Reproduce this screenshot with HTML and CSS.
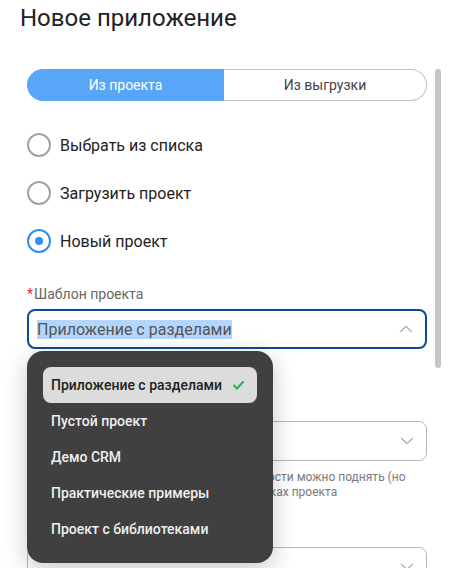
FILE: index.html
```html
<!DOCTYPE html>
<html>
<head>
    <meta name="viewport" content="width=device-width, initial-scale=1.0">
    <title>Новое приложение</title>
    <link rel="stylesheet" href="styles.css">
</head>
<body>
<div class="app">
    <h1 class="title">Новое приложение</h1>
    <div class="content">
        <form class="form">
            <div class="tabs">
                <button type="button" class="tab active">Из проекта</button>
                <button type="button" class="tab">Из выгрузки</button>
            </div>

            <div class="radios">
                <label class="radio"><span class="radio-mark"></span>Выбрать из списка</label>
                <label class="radio"><span class="radio-mark"></span>Загрузить проект</label>
                <label class="radio"><span class="radio-mark checked"></span>Новый проект</label>
            </div>

            <div class="field field-template">
                <div class="field-label"><span class="req">*</span>Шаблон проекта</div>
                <div class="select-wrap">
                    <div class="select open">
                        <span class="select-value"><mark>Приложение с разделами</mark></span>
                        <svg class="chevron" width="14" height="8" viewBox="0 0 14 8">
                            <polyline points="1,7 7,1.5 13,7" fill="none" stroke="#b0b0b0" stroke-width="1.3"/>
                        </svg>
                    </div>
                    <ul class="menu">
                        <li class="menu-item selected">
                            Приложение с разделами
                            <svg width="13" height="10" viewBox="0 0 13 10">
                                <polyline points="1.5,5 5,8.5 11.5,1.5" fill="none" stroke="#2bb44a" stroke-width="2"/>
                            </svg>
                        </li>
                        <li class="menu-item">Пустой проект</li>
                        <li class="menu-item">Демо CRM</li>
                        <li class="menu-item">Практические примеры</li>
                        <li class="menu-item">Проект с библиотеками</li>
                    </ul>
                </div>
            </div>

            <div class="field field-depth">
                <div class="field-label">Уровень вложенности</div>
                <div class="select">
                    <span class="select-value"></span>
                    <svg class="chevron" width="14" height="8" viewBox="0 0 14 8">
                        <polyline points="1,1 7,6.5 13,1" fill="none" stroke="#b0b0b0" stroke-width="1.3"/>
                    </svg>
                </div>
                <p class="hint">Максимальный текущий уровень вложенности можно поднять (но только до уровня, заданного в его настройках проекта</p>
            </div>

            <div class="field field-last">
                <div class="field-label">Тема</div>
                <div class="select">
                    <span class="select-value"></span>
                    <svg class="chevron" width="14" height="8" viewBox="0 0 14 8">
                        <polyline points="1,1 7,6.5 13,1" fill="none" stroke="#b0b0b0" stroke-width="1.3"/>
                    </svg>
                </div>
            </div>
        </form>
        <div class="scrollbar"><div class="thumb"></div></div>
    </div>
</div>
</body>
</html>
```

FILE: styles.css
```css
* {
    margin: 0;
    padding: 0;
    box-sizing: border-box;
    font-family: 'Roboto', 'Noto Sans', sans-serif;
}
body {
    background: #fff;
    height: 568px;
    overflow: hidden;
}
.app {
    padding: 4px 0 0 20px;
}
.title {
    font-size: 24px;
    line-height: 28px;
    font-weight: 400;
    color: #222;
    margin-bottom: 37px;
}
.content {
    display: flex;
    align-items: flex-start;
}
.form {
    width: 400px;
    margin-left: 7px;
}
.scrollbar {
    margin-left: 8px;
    width: 6px;
}
.scrollbar .thumb {
    height: 299px;
    background: #c6c6c6;
    border-radius: 3px;
}

/* segmented switch */
.tabs {
    display: flex;
    height: 32px;
}
.tab {
    border: 0;
    outline: 0;
    background: #fff;
    font-size: 14px;
    color: #444;
    cursor: pointer;
}
.tab.active {
    width: 197px;
    background: #58a6f8;
    color: #fff;
    border-radius: 16px 0 0 16px;
}
.tab:not(.active) {
    flex: 1;
    border: 1px solid #c2c2c2;
    border-left: 0;
    border-radius: 0 16px 16px 0;
}

/* radio list */
.radios {
    margin-top: 20px;
}
.radio {
    display: flex;
    align-items: center;
    gap: 9px;
    height: 48px;
    font-size: 16px;
    color: #222;
}
.radio-mark {
    width: 24px;
    height: 24px;
    border: 2px solid #a2a2a2;
    border-radius: 50%;
    display: flex;
    align-items: center;
    justify-content: center;
}
.radio-mark.checked {
    border-color: #2f8ff3;
}
.radio-mark.checked::after {
    content: '';
    width: 8px;
    height: 8px;
    border-radius: 50%;
    background: #2f8ff3;
}

/* form fields */
.field-template {
    margin-top: 19px;
}
.field-depth {
    margin-top: 47px;
}
.field-last {
    margin-top: 22px;
}
.field-label {
    font-size: 14px;
    line-height: 20px;
    color: #666;
    margin-bottom: 5px;
}
.req {
    color: #f5222d;
    margin-right: 1px;
}
.select {
    height: 40px;
    border: 1px solid #b8b8b8;
    border-radius: 8px;
    display: flex;
    align-items: center;
    justify-content: space-between;
    padding: 0 12px 0 9px;
}
.select.open {
    border: 2px solid #0b4c97;
    padding-left: 8px;
}
.select-value {
    font-size: 16px;
    color: #555;
}
.select-value mark {
    background: #b4d6fd;
    color: inherit;
}
.hint {
    margin-top: 9px;
    font-size: 12px;
    line-height: 15px;
    color: #7a7a7a;
}

/* open dropdown */
.select-wrap {
    position: relative;
}
.menu {
    position: absolute;
    top: calc(100% + 2px);
    left: 0;
    width: 246px;
    padding: 16px;
    list-style: none;
    background: #404040;
    border-radius: 16px;
    box-shadow: 0 6px 24px rgba(0, 0, 0, 0.22);
    z-index: 10;
}
.menu-item {
    height: 36px;
    display: flex;
    align-items: center;
    justify-content: space-between;
    padding: 0 12px 0 8px;
    border-radius: 8px;
    font-size: 14px;
    font-weight: 500;
    white-space: nowrap;
    color: #eee;
}
.menu-item.selected {
    background: #dcdcdc;
    color: #222;
}
```
